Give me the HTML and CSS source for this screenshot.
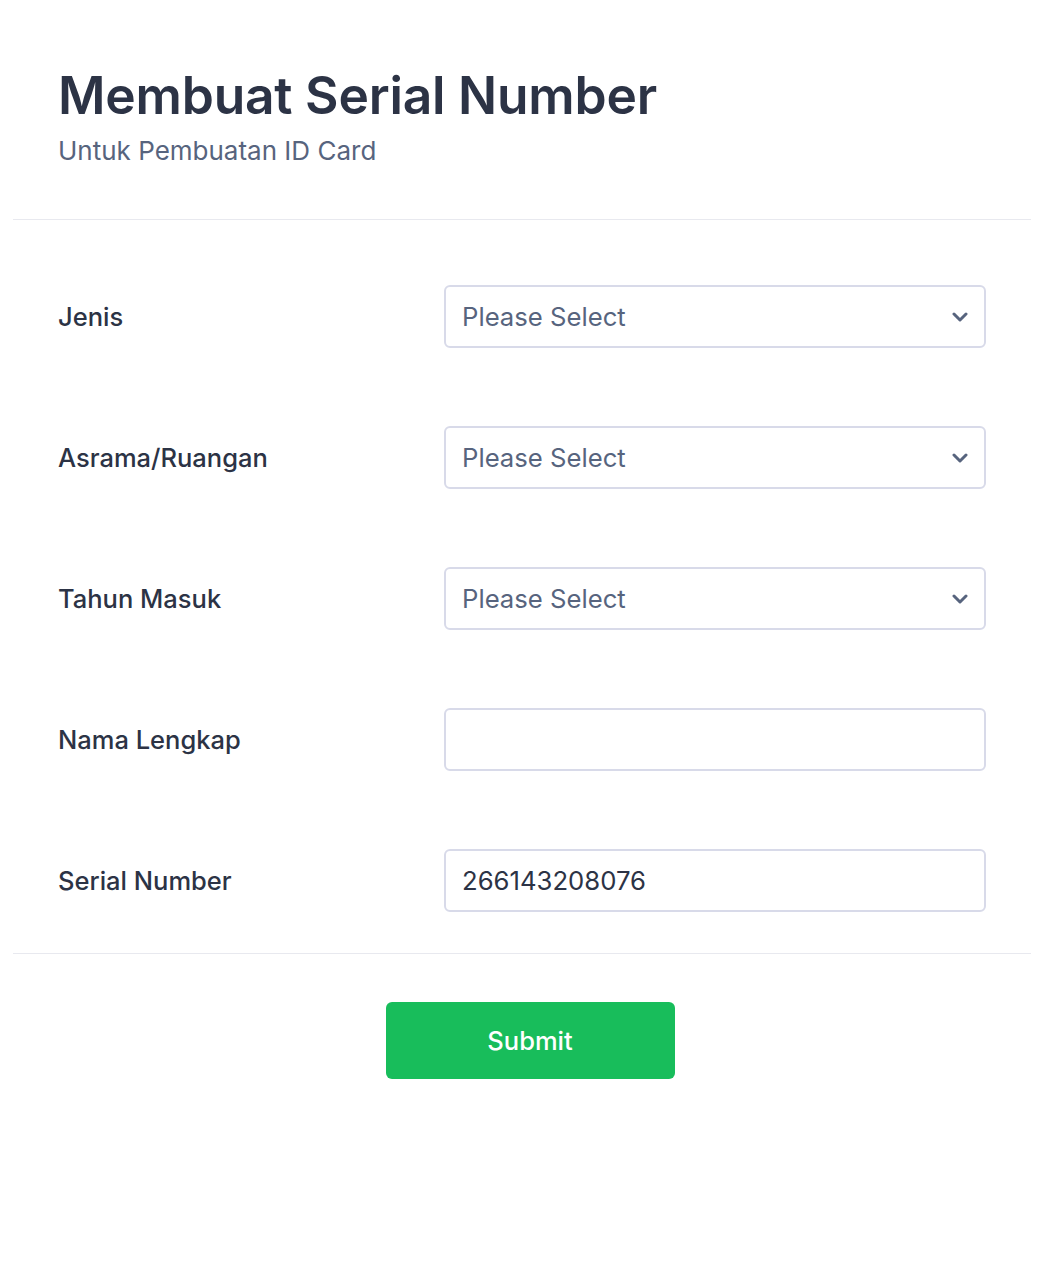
FILE: index.html
```html
<!DOCTYPE html>
<html lang="id">
<head>
<meta charset="utf-8">
<title>Membuat Serial Number</title>
<link rel="stylesheet" href="styles.css">
</head>
<body>
<div class="form">
  <header class="header">
    <h1 class="title">Membuat Serial Number</h1>
    <p class="subtitle">Untuk Pembuatan ID Card</p>
  </header>
  <div class="fields">
    <div class="row">
      <label class="label">Jenis</label>
      <div class="control select">
        <span class="placeholder">Please Select</span>
        <svg class="chev" width="16" height="10" viewBox="0 0 16 10"><path d="M2 2l6 6 6-6" fill="none" stroke="#57647e" stroke-width="3" stroke-linecap="round" stroke-linejoin="round"/></svg>
      </div>
    </div>
    <div class="row">
      <label class="label">Asrama/Ruangan</label>
      <div class="control select">
        <span class="placeholder">Please Select</span>
        <svg class="chev" width="16" height="10" viewBox="0 0 16 10"><path d="M2 2l6 6 6-6" fill="none" stroke="#57647e" stroke-width="3" stroke-linecap="round" stroke-linejoin="round"/></svg>
      </div>
    </div>
    <div class="row">
      <label class="label">Tahun Masuk</label>
      <div class="control select">
        <span class="placeholder">Please Select</span>
        <svg class="chev" width="16" height="10" viewBox="0 0 16 10"><path d="M2 2l6 6 6-6" fill="none" stroke="#57647e" stroke-width="3" stroke-linecap="round" stroke-linejoin="round"/></svg>
      </div>
    </div>
    <div class="row">
      <label class="label">Nama Lengkap</label>
      <div class="control"></div>
    </div>
    <div class="row">
      <label class="label">Serial Number</label>
      <div class="control"><span class="value">266143208076</span></div>
    </div>
  </div>
  <div class="actions">
    <button class="submit" type="button">Submit</button>
  </div>
</div>
</body>
</html>
```
FILE: styles.css
```css
html, body {
  margin: 0;
  padding: 0;
  background: #ffffff;
}
body {
  font-family: Inter, "Noto Sans", sans-serif;
  color: #2c3345;
}
.form {
  margin: 0 13px;
}
.header {
  padding: 64px 45px 52px;
  border-bottom: 1px solid #e8e9ef;
}
.title {
  margin: 0;
  font-size: 51.5px;
  line-height: 62px;
  font-weight: 600;
  color: #2c3345;
  letter-spacing: -0.2px;
}
.subtitle {
  margin: 9px 0 0;
  font-size: 26px;
  line-height: 32px;
  color: #57647e;
}
.fields {
  padding: 65px 45px 41px 45px;
  border-bottom: 1px solid #e8e9ef;
  display: flex;
  flex-direction: column;
  gap: 78px;
}
.row {
  display: grid;
  grid-template-columns: 386px 1fr;
  align-items: center;
}
.label {
  font-size: 25.5px;
  font-weight: 500;
  color: #2c3345;
}
.control {
  height: 63px;
  box-sizing: border-box;
  border: 2px solid #d8dae9;
  border-radius: 6px;
  display: flex;
  align-items: center;
  padding: 0 16px 0 16px;
  font-size: 25.7px;
}
.select {
  justify-content: space-between;
}
.placeholder {
  color: #57647e;
}
.value {
  color: #2c3345;
}
.chev {
  display: block;
}
.actions {
  display: flex;
  justify-content: center;
  padding: 48px 0 0 0;
}
.submit {
  width: 289px;
  height: 77px;
  border: none;
  border-radius: 6px;
  background: #18bd5b;
  color: #ffffff;
  font-family: Inter, "Noto Sans", sans-serif;
  font-size: 25.5px;
  font-weight: 500;
  margin-left: 16px;
}
```
